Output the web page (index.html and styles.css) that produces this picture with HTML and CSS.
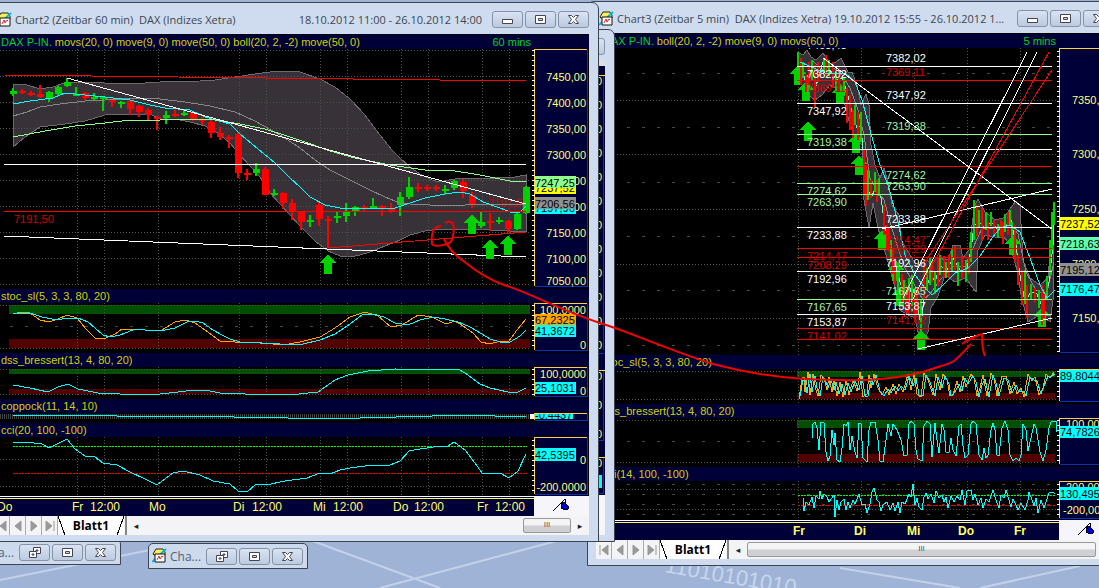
FILE: index.html
```html
<!DOCTYPE html>
<html lang="de">
<head>
	<meta charset="UTF-8">
	<meta name="viewport" content="width=device-width, initial-scale=1.0">
	<title>DAX Charts</title>
	<link rel="stylesheet" href="styles.css">
</head>
<body>
	<!-- shared icons -->
	<svg class="defs" width="0" height="0">
		<symbol id="up" viewBox="0 0 16 20"><path d="M8 0L16 9H12V20H4V9H0z" fill="#00d200"/></symbol>
		<symbol id="doc" viewBox="0 0 15 15">
			<path d="M1 6L4 1H11L13 4V7H2z" fill="#ffee58" stroke="#222"/>
			<path d="M0 14L14 1" stroke="#00b8e6" stroke-width="2"/>
			<path d="M3 6H13V14H3z" fill="#fff" stroke="#111"/>
			<path d="M5 12L7 8L8 11L10 8L11 9" fill="none" stroke="#e22"/>
		</symbol>
		<symbol id="min" viewBox="0 0 13 13"><path d="M1.500 6.500H11.500V10.500H1.500z" fill="#fff" stroke="#445"/></symbol>
		<symbol id="max" viewBox="0 0 13 13"><path d="M1.500 2.500H11.500V10.500H1.500zM4.500 5.500H8.500V7.500H4.500z" fill="#fff" fill-rule="evenodd" stroke="#445"/></symbol>
		<symbol id="restore" viewBox="0 0 13 13">
			<path d="M5.500 1.500H12.500V7.500H5.500zM8 4H10V5H8z" fill="#fff" fill-rule="evenodd" stroke="#445"/>
			<path d="M1.500 5.500H8.500V11.500H1.500zM4 8H6V9H4z" fill="#fff" fill-rule="evenodd" stroke="#445"/>
		</symbol>
		<symbol id="close" viewBox="0 0 13 13"><path d="M1.500 2.500H4.500L6.500 4.500L8.500 2.500H11.500L8.500 6.500L11.500 10.500H8.500L6.500 8.500L4.500 10.500H1.500L4.500 6.500z" fill="#fff" stroke="#445"/></symbol>
		<symbol id="pin" viewBox="0 0 16 13"><path d="M0 12L12 0V4" fill="none" stroke="#000"/><path d="M8 5L11 3L15 7V10L12 11L8 9z" fill="#00c" stroke="#002"/></symbol>
	</svg>

	<main class="desktop">
		<svg class="wallpaper" viewBox="0 0 1099 588" preserveAspectRatio="xMinYMax slice">
			<path d="M310 540L440 588M380 588L560 540M0 580L160 548M840 568L960 588M980 588L1080 566" stroke="#c3d2ea" stroke-width="2" fill="none"/>
			<text x="664" y="572" transform="rotate(10 664 572)">11010101010</text>
		</svg>

		<!-- Chart3 -->
		<section class="window chart3">
			<header class="titlebar">
				<svg class="app-icon"><use href="#doc"/></svg>
				<h2>Chart3 (Zeitbar 5 min)&nbsp; DAX (Indizes Xetra) <span>19.10.2012 15:55 - 26.10.2012 1...</span></h2>
				<button aria-label="Minimieren"><svg><use href="#min"/></svg></button>
				<button aria-label="Maximieren"><svg><use href="#max"/></svg></button>
				<button aria-label="Schließen"><svg><use href="#close"/></svg></button>
			</header>
			<div class="pane-head first"><b>DAX P-IN.</b> boll(20, 2, -2) move(9, 0) movs(60, 0) <i>5 mins</i></div>
			<svg class="plot" viewBox="596 48 518 307">
				<path class="grid" d="M605 100.500H1058M605 154.500H1058M605 209.500H1058M605 264.500H1058M605 318.500H1058M798.500 48V355M861.500 48V355M914.500 48V355M967.500 48V355M1020.500 48V355"/>
				<path class="dash" d="M612 73.500H1058M612 127.500H1058M612 182.500H1058M612 236.500H1058M612 290.500H1058M612 345.500H1058"/>
				<path class="band" d="M797 52L803 55L807 50L811 57L816 60L823 53L830 64L836 62L841 58L848 72L852 72L857 85L861 105L866 94L869 105L871 145L875 165L880 178L884 168L888 182L892 205L899 215L901 240L912 258L918 268L925 260L931 262L937 258L948 260L953 245L960 245L963 258L969 250L972 225L975 205L978 199L985 212L995 220L1003 218L1008 212L1012 206L1016 201L1020 206L1023 260L1030 278L1040 285L1048 278L1050 255L1053 215V300L1050 322L1045 318L1038 316L1028 322L1022 300L1017 270L1010 245L1004 237L995 237L985 235L978 250L976 292L970 284L966 278L955 282L945 275L938 296L931 308L928 332L921 345L915 318L908 315L900 310L893 280L886 255L878 228L873 203L869 228L864 200L862 145L857 140L850 125L845 105L838 90L830 85L822 95L815 100L808 95L802 85L797 75z"/>
				<g fill="#00d200">
					<use href="#up" x="790" y="65" width="16" height="20"/><use href="#up" x="798" y="81" width="16" height="20"/>
					<use href="#up" x="800" y="121" width="16" height="20"/><use href="#up" x="832" y="80" width="16" height="27"/>
					<use href="#up" x="848" y="133" width="16" height="20"/><use href="#up" x="851" y="155" width="16" height="20"/>
					<use href="#up" x="874" y="229" width="16" height="22"/><use href="#up" x="888" y="260" width="16" height="21"/>
					<use href="#up" x="892" y="286" width="16" height="20"/><use href="#up" x="913" y="330" width="16" height="20"/>
					<use href="#up" x="1005" y="235" width="16" height="20"/><use href="#up" x="1034" y="307" width="16" height="20"/>
				</g>
				<path class="line gray" d="M812 60L822 70L830 66L840 72L850 88L858 110L864 135L870 178L878 192L884 200L890 222L897 245L905 268L915 286L923 300L930 294L940 280L952 267L965 266L973 248L982 228L995 228L1010 224L1018 234L1026 272L1036 290L1046 296L1054 262"/>
				<path class="line mint" d="M800 60L805 80L812 68L816 86L823 62L829 68L836 80L842 78L847 92L852 112L857 128L861 126L863 150L867 190L872 196L876 186L881 198L884 220L888 242L893 253L897 272L902 288L907 302L912 285L917 305L921 325L925 290L931 275L935 282L940 266L947 270L953 258L960 270L966 272L971 250L974 225L979 222L985 228L991 222L998 230L1006 226L1011 220L1016 245L1020 275L1025 302L1031 292L1037 294L1043 309L1049 282L1053 245V222"/>
				<path class="tick-up" d="M798 52V70M803 62V78M812 60V80M824 58V72M829 60V76M836 72V90M844 78V96M855 105V125M861 112V140M868 170V200M875 172V192M879 178V196M891 240V262M898 265V290M904 280V300M909 278V302M912 275V306M921 300V338M927 268V290M930 258V285M935 272V294M940 255V275M946 262V278M952 248V272M958 262V286M966 260V282M971 232V262M974 200V240M979 210V228M986 212V230M991 212V226M998 224V238M1005 214V232M1010 210V226M1012 222V240M1025 270V304M1031 284V300M1039 290V308M1047 276V300M1050 240V276M1052 212V250M1054 202V225"/>
				<path class="tick-down" d="M801 58V85M806 75V92M809 62V84M815 65V107M818 62V82M826 55V76M833 62V88M839 68V92M847 88V123M850 95V130M853 110V138M858 112V140M864 150V196M866 165V206M871 180V198M877 180V202M884 205V235M887 225V250M889 228V252M893 248V274M895 258V284M902 274V302M906 285V312M908 290V315M915 292V322M917 288V315M924 260V300M932 262V282M938 258V286M944 256V278M949 255V278M955 246V270M962 256V278M969 258V274M977 205V236M982 208V240M988 222V240M994 220V236M1001 220V236M1003 222V244M1008 212V235M1015 225V262M1018 255V285M1022 270V305M1027 285V318M1035 288V302M1042 285V325M1044 290V318"/>
				<path class="line cyan" d="M800 62L825 73L845 73L855 82L862 100L870 130L880 165L888 185L898 222L905 255L915 275L925 288L932 295L942 286L955 273L968 268L980 256L992 238L1000 228L1010 225L1020 232L1030 258L1040 285L1047 298L1055 290"/>
				<path class="line white" d="M797 66.500H1052M797 103.500H1052M797 149.500H1052M797 227.500H1052M797 271.500H1052M797 314.500H1052"/>
				<path class="line red" d="M797 80.500H1052M797 166.500H1052M797 248.500H1052M797 257.500H1052M797 328.500H1052M797 339.500H1052"/>
				<path class="line lime" d="M797 134.500H1052M797 183.500H1052M797 194.500H1052M797 299.500H1052"/>
				<path class="line white" d="M823 58L1052 229M903 298L1027 52M906 313L1037 52M882 229L1052 189M918 349L1052 318"/>
				<path class="line red" d="M904 317L1049 52M923 265L1052 70"/>
				<g class="t white">
					<text x="807" y="49">7403,43</text>
					<text x="807" y="78">7382,02</text><text x="807" y="115">7347,92</text><text x="807" y="239">7233,88</text><text x="807" y="283">7192,96</text><text x="807" y="326">7153,87</text>
					<text x="886" y="62">7382,02</text><text x="886" y="99">7347,92</text><text x="886" y="223">7233,88</text><text x="886" y="267">7192,96</text><text x="886" y="310">7153,87</text>
				</g>
				<g class="t dark-red">
					<text x="807" y="92">7369,11</text><text x="807" y="260">7214,47</text><text x="807" y="269">7208,29</text><text x="807" y="340">7141,02</text>
					<text x="886" y="76">7369,11</text><text x="886" y="244">7214,47</text><text x="886" y="253">7208,29</text><text x="886" y="324">7141,02</text>
				</g>
				<g class="t lime">
					<text x="807" y="146">7319,38</text><text x="807" y="195">7274,62</text><text x="807" y="206">7263,90</text><text x="807" y="311">7167,65</text>
					<text x="886" y="130">7319,38</text><text x="886" y="179">7274,62</text><text x="886" y="190">7263,90</text><text x="886" y="295">7167,65</text>
				</g>
				<path class="scale" d="M1059 48H1114V352H1059z"/>
				<path class="edge-y" d="M1059.500 352V48.500H1113"/><path class="edge-b" d="M1060 352.500H1113"/>
				<path class="ticks" d="M1058 51V352"/>
				<g class="t yellow"><text x="1072" y="104">7350,00</text><text x="1072" y="158">7300,00</text><text x="1072" y="213">7250,00</text><text x="1072" y="268">7200,00</text><text x="1072" y="322">7150,00</text></g>
				<g class="tag">
					<rect x="1060" y="217" width="44" height="13" fill="#ff0"/><text x="1060" y="228">7237,52</text>
					<rect x="1060" y="237" width="44" height="13" fill="#5fffb0"/><text x="1060" y="248">7218,63</text>
					<rect x="1060" y="263" width="44" height="13" fill="#909090"/><text x="1060" y="274">7195,12</text>
					<rect x="1060" y="283" width="44" height="13" fill="#0ff"/><text x="1060" y="293">7176,47</text>
				</g>
			</svg>
			<div class="pane-head">stoc_sl(5, 3, 3, 80, 20)</div>
			<svg class="plot" viewBox="596 369 518 35">
				<path class="hi" d="M797 371H1055V377H797z"/><path class="lo" d="M797 393H1055V399H797z"/>
				<path class="grid" d="M605 371.500H1058M605 399.500H1058M798.500 369V404M861.500 369V404M914.500 369V404M967.500 369V404M1020.500 369V404"/>
				<path class="line orange" d="M799 399L802 378L804 377L805 392L808 372L810 395L813 374L816 390L818 396L821 375L824 378L827 390L829 377L832 392L834 380L837 396L840 382L843 397L846 380L849 395L853 380L857 391L860 372L863 397L867 394L869 375L871 388L874 374L878 388L882 395L886 387L889 395L893 384L896 394L899 384L903 392L908 374L911 390L914 374L917 394L921 397L924 373L928 380L933 395L936 374L940 390L943 374L947 380L950 396L953 395L957 381L960 392L963 376L966 387L971 374L974 378L977 396L980 388L983 375L987 396L991 373L994 378L997 396L1002 376L1006 376L1010 394L1014 382L1017 394L1021 388L1024 397L1028 374L1032 381L1035 377L1039 395L1043 388L1046 374L1050 378L1054 372"/>
				<path class="line cyan" d="M800 396L803 380L805 380L807 393L810 374L812 392L815 376L817 388L820 396L823 377L826 382L828 388L831 379L834 390L836 382L839 394L842 384L845 395L848 383L851 392L855 381L859 390L862 376L865 396L868 396L871 378L873 385L876 375L880 391L884 396L888 389L891 393L895 386L898 391L901 386L905 390L909 376L913 386L916 378L919 395L923 396L926 375L930 382L935 396L938 377L942 388L945 376L949 384L951 396L955 392L959 384L962 391L965 378L968 384L973 376L976 382L979 397L982 385L985 379L989 397L993 375L996 383L999 396L1004 378L1008 380L1012 393L1016 385L1019 392L1023 391L1026 396L1030 377L1034 380L1037 381L1041 394L1044 386L1048 376L1052 376L1055 374"/>
				<path class="scale" d="M1059 369H1114V401H1059z"/><path class="edge-y" d="M1059.500 401V369.500H1113"/><path class="edge-b" d="M1060 401.500H1113"/><path class="ticks" d="M1058 371V401"/>
				<g class="tag"><rect x="1060" y="370" width="44" height="12" fill="#0ff"/><text x="1060" y="380">89,8044</text></g>
			</svg>
			<div class="pane-head">dss_bressert(13, 4, 80, 20)</div>
			<svg class="plot" viewBox="596 418 518 49">
				<path class="hi" d="M797 420H1055V428H797z"/><path class="lo" d="M797 454H1055V462H797z"/>
				<path class="grid" d="M605 420.500H1058M605 462.500H1058M798.500 418V467M861.500 418V467M914.500 418V467M967.500 418V467M1020.500 418V467"/>
				<path class="dash" d="M612 441.500H1058"/>
				<path class="line cyan" d="M812 438L813 424L815 422L817 428L819 450L821 422L824 423L826 452L828 461L830 456L832 430L834 445L835 433L837 460L840 462L842 448L844 424L846 426L848 422L850 450L852 436L855 452L857 458L859 423L861 424L863 458L867 462L869 430L871 422L875 422L878 440L880 461L883 462L886 440L888 424L891 436L893 424L897 430L901 440L904 456L907 455L909 424L911 421L914 424L916 450L918 459L922 461L924 426L927 421L930 424L932 457L935 423L937 440L939 453L942 424L944 430L946 452L949 452L951 438L953 450L956 456L959 426L961 424L963 446L965 458L968 455L971 424L973 421L976 424L979 455L982 460L984 448L986 458L988 455L991 430L993 423L995 430L997 455L999 456L1002 428L1005 421L1008 430L1010 455L1013 461L1016 458L1019 461L1021 455L1023 424L1026 430L1028 451L1031 438L1034 424L1036 428L1040 452L1043 461L1046 450L1049 428L1051 422L1056 421L1057 432"/>
				<path class="scale" d="M1059 418H1114V464H1059z"/><path class="edge-y" d="M1059.500 464V418.500H1113"/><path class="edge-b" d="M1060 464.500H1113"/><path class="ticks" d="M1058 420V464"/>
				<g class="t yellow"><text x="1066" y="428">100,0000</text></g>
				<g class="tag"><rect x="1060" y="426" width="44" height="12" fill="#0ff"/><text x="1060" y="436">74,7826</text></g>
			</svg>
			<div class="pane-head">cci(14, 100, -100)</div>
			<svg class="plot" viewBox="596 481 518 39">
				<path class="dash" d="M612 484.500H1058M612 494.500H1058M612 504.500H1058M612 514.500H1058"/>
				<path class="grid" d="M605 489.500H1058M605 509.500H1058M798.500 481V520M861.500 481V520M914.500 481V520M967.500 481V520M1020.500 481V520"/>
				<path class="dots-green" d="M798 495.500H1055"/><path class="dots-red" d="M798 505.500H1055"/>
				<path class="line cyan" d="M803 498L804 511L806 502L809 505L812 497L814 508L816 496L819 499L820 491L822 499L824 494L827 497L829 502L832 498L834 495L835 517L837 500L839 510L841 502L844 499L846 510L848 502L850 508L853 500L855 504L859 494L862 505L865 504L867 513L870 504L872 492L874 488L877 500L879 502L881 511L883 505L887 502L890 510L893 503L895 511L898 502L900 513L902 502L905 504L909 494L911 497L913 484L915 505L917 498L919 507L922 510L924 497L926 493L928 499L931 494L934 503L936 491L939 498L942 495L944 502L946 497L948 508L951 496L954 502L957 496L960 500L962 490L965 505L967 491L971 490L973 500L975 494L978 505L981 498L983 508L986 499L989 502L993 490L996 500L999 508L1001 495L1004 498L1006 490L1009 500L1011 507L1013 499L1016 505L1018 510L1021 503L1025 510L1028 500L1029 492L1032 500L1034 506L1036 498L1038 513L1041 500L1044 508L1047 499L1049 493L1053 492L1055 494"/>
				<path class="scale" d="M1059 481H1114V518H1059z"/><path class="edge-y" d="M1059.500 518V481.500H1113"/><path class="edge-b" d="M1060 518.500H1113"/><path class="ticks" d="M1058 484V518"/>
				<g class="t yellow"><text x="1066" y="491">200,0000</text><text x="1063" y="514">-200,0000</text></g>
				<g class="tag"><rect x="1060" y="487" width="50" height="13" fill="#0ff"/><text x="1060" y="498">130,4954</text></g>
			</svg>
			<svg class="axis bold" viewBox="596 520 518 20">
				<path d="M596 520H1059V540H596z" fill="#000038"/><path d="M1059 518H1114V540H1059z" fill="#f6f6fa"/>
				<path class="line white" d="M596 520.500H1059"/><path class="line yellow" d="M596 522.500H1059"/>
				<text x="793" y="535">Fr</text><text x="854" y="535">Di</text><text x="907" y="535">Mi</text><text x="958" y="535">Do</text><text x="1014" y="535">Fr</text>
				<use href="#pin" x="1078" y="523" width="16" height="13"/>
			</svg>
			<div class="tabbar">
				<button class="nav" aria-label="Erstes Blatt"><svg viewBox="0 0 10 12"><path d="M1 1V11M9 1V11L3 6z"/></svg></button>
				<button class="nav" aria-label="Zurück"><svg viewBox="0 0 10 12"><path d="M8 1V11L2 6z"/></svg></button>
				<button class="nav" aria-label="Weiter"><svg viewBox="0 0 10 12"><path d="M2 1V11L8 6z"/></svg></button>
				<button class="nav" aria-label="Letztes Blatt"><svg viewBox="0 0 10 12"><path d="M1 1V11L7 6zM9 1V11"/></svg></button>
				<button class="tab">Blatt1</button>
				<div class="scrollbar"><button class="arrow" aria-label="Links">◂</button><span class="thumb wide">III</span><button class="arrow" aria-label="Rechts">▸</button></div>
			</div>
		</section>

		<!-- window mostly hidden behind Chart2 -->
		<section class="window hidden-chart">
			<header class="titlebar">
				<button aria-label="Schließen"></button>
			</header>
			<svg class="plot" viewBox="590 61 15 474">
				<path d="M590 61H605V66H590z" fill="#ddd"/><path class="scale" d="M590 66H605V494H590z"/>
				<path class="edge-y" d="M590 75.500H605M590 370.500H605M590 457.500H605"/><path class="edge-b" d="M603.500 76V350M603.500 371V440M603.500 458V494M590 353.500H604M590 440.500H604M590 493.500H604"/>
				<path d="M590 475H602V488H590z" fill="#0ff"/><path d="M590 495H605V535H590z" fill="#f6f6fa"/>
				<g class="t yellow end"><text x="602" y="85">0</text><text x="602" y="109">0</text><text x="602" y="133">0</text><text x="602" y="157">0</text><text x="602" y="181">0</text><text x="602" y="205">0</text><text x="602" y="229">0</text><text x="602" y="253">0</text><text x="602" y="277">0</text><text x="602" y="301">0</text><text x="602" y="325">0</text><text x="602" y="349">0</text><text x="602" y="380">0</text><text x="602" y="409">0</text><text x="602" y="438">0</text><text x="602" y="467">0</text></g>
			</svg>
		</section>

		<!-- minimised windows -->
		<section class="minimised one">
			<svg class="app-icon"><use href="#doc"/></svg><h2>Cha...</h2>
			<button aria-label="Wiederherstellen"><svg><use href="#restore"/></svg></button>
			<button aria-label="Maximieren"><svg><use href="#max"/></svg></button>
			<button aria-label="Schließen"><svg><use href="#close"/></svg></button>
		</section>
		<section class="minimised two">
			<svg class="app-icon"><use href="#doc"/></svg><h2>Cha...</h2>
			<button aria-label="Wiederherstellen"><svg><use href="#restore"/></svg></button>
			<button aria-label="Maximieren"><svg><use href="#max"/></svg></button>
			<button aria-label="Schließen"><svg><use href="#close"/></svg></button>
		</section>

		<!-- Chart2 -->
		<section class="window chart2">
			<header class="titlebar">
				<svg class="app-icon"><use href="#doc"/></svg>
				<h2>Chart2 (Zeitbar 60 min)&nbsp; DAX (Indizes Xetra)</h2>
				<span class="range">18.10.2012 11:00 - 26.10.2012 14:00</span>
				<button aria-label="Minimieren"><svg><use href="#min"/></svg></button>
				<button aria-label="Maximieren"><svg><use href="#max"/></svg></button>
				<button aria-label="Schließen"><svg><use href="#close"/></svg></button>
			</header>
			<div class="pane-head first"><b>DAX P-IN.</b> movs(20, 0) move(9, 0) move(50, 0) boll(20, 2, -2) move(50, 0) <i>60 mins</i></div>
			<svg class="plot" viewBox="-6 49 595 240">
				<path class="band" d="M13 84L27 85L40 89L53 87L67 82L80 82L130 84L160 82L200 81L215 80L235 77L255 74L270 72L288 71L300 72L320 79L335 87L350 99L365 115L380 135L392 150L400 158L410 167L420 174L432 180L438 182L455 179L470 178L495 178L515 177L526 175V231L510 231L490 230L460 229L440 229L425 231L410 235L400 240L385 246L370 252L360 255L350 257L340 256L328 251L315 241L300 226L290 215L280 204L270 193L260 177L250 166L240 155L230 143L215 131L205 126L190 122L175 119L160 119L150 114L130 114L105 115L85 121L65 124L40 127L25 137L13 147z"/>
				<path class="grid" d="M0 50.500H531M0 76.500H531M0 102.500H531M0 128.500H531M0 154.500H531M0 180.500H531M0 206.500H531M0 232.500H531M0 258.500H531M0 284.500H531M77.500 49V286M104.500 49V286M158.500 49V286M239.500 49V286M266.500 49V286M320.500 49V286M347.500 49V286M401.500 49V286M428.500 49V286M482.500 49V286M509.500 49V286"/>
				<g class="t dark-red"><text x="488" y="207">7191,50</text></g>
				<path class="tick-up" d="M13 88V96M49 91V102M58 86V96M67 78V87M76 87V96M94 93V100M103 96V111M121 101V108M166 111V124M184 110V116M256 163V176M274 189V196M310 215V227M337 211V223M346 203V222M355 206V216M373 198V208M400 192V216M409 177V199M445 185V194M454 180V190M481 212V228M499 217V224M517 213V230M526 186V214"/>
				<path class="body-up" d="M13 91V94M49 92V98M58 87V94M67 82V86M76 94V96M94 97V99M103 97V99M121 102V104M166 115V118M184 113V115M256 169V173M274 193V195M310 220V222M337 216V218M346 212V216M355 207V211M373 206V208M400 197V205M409 187V197M445 189V191M454 181V188M481 222V226M499 220V222M517 214V229M526 187V213"/>
				<path class="tick-down" d="M22 89V94M31 91V96M40 85V98M85 92V100M112 98V107M130 100V115M139 105V117M148 108V120M157 116V130M175 108V117M193 112V121M202 117V125M211 120V138M220 127V140M229 135V148M238 132V178M247 169V180M265 167V195M283 192V209M292 199V220M301 211V230M319 201V226M328 216V248M364 205V212M382 205V216M391 203V213M418 183V192M427 185V191M436 185V191M463 179V198M472 192V208M490 213V231M508 220V232"/>
				<path class="body-down" d="M22 91V93M31 93V95M40 94V97M85 93V98M112 99V102M130 101V109M139 106V112M148 110V115M157 117V119M175 114V116M193 112V120M202 119V121M211 122V133M220 133V137M229 137V139M238 134V173M247 173V175M265 169V195M283 193V203M292 203V212M301 212V222M319 205V219M328 219V221M364 207V209M382 206V208M391 209V211M418 187V189M427 187V189M436 187V189M463 182V191M472 195V204M490 221V223M508 221V229"/>
				<path class="line gray" d="M13 116L27 112L40 107L60 104L85 101L105 100L140 98L160 99L185 102L210 106L235 112L255 121L280 135L300 148L315 160L330 170L350 180L370 190L385 197L400 203L410 204L430 205L465 205L480 204L526 204"/>
				<path class="line cyan" d="M13 104L30 101L53 98L65 93L85 95L105 97L130 100L150 105L165 108L190 110L205 117L230 124L240 134L258 149L275 163L290 178L300 187L310 197L325 205L340 208L395 208L410 203L425 198L445 194L460 192L470 194L483 202L500 208L510 212L520 212L526 206"/>
				<path class="line lime" d="M13 137L45 131L75 126L105 123L130 120L160 120L190 119L215 120L240 124L265 129L290 137L308 143L330 151L355 158L390 165L425 170L455 171L480 175L510 181L526 182"/>
				<path class="line white" d="M67 78L526 204M4 164.500H526M4 236L526 257"/>
				<path class="line red" d="M4 75L526 81M4 211.500H526M328 248L526 232"/>
				<use href="#up" x="320" y="254" width="16" height="20"/><use href="#up" x="464" y="214" width="16" height="20"/>
				<use href="#up" x="482" y="239" width="16" height="20"/><use href="#up" x="500" y="235" width="16" height="20"/>
				<g class="t dark-red"><text x="14" y="223">7191,50</text></g>
				<path class="scale" d="M534 49H588V286H534z"/><path class="edge-y" d="M534.500 286V49.500H587"/><path class="edge-b" d="M535 286H587.500V50"/><path class="ticks" d="M533 50V285"/>
				<g class="t yellow end"><text x="586" y="81">7450,00</text><text x="586" y="107">7400,00</text><text x="586" y="133">7350,00</text><text x="586" y="159">7300,00</text><text x="586" y="185">7250,00</text><text x="586" y="211">7200,00</text><text x="586" y="237">7150,00</text><text x="586" y="263">7100,00</text><text x="586" y="285">7050,00</text></g>
				<g class="tag">
					<rect x="535" y="182" width="41" height="12" fill="#ff0"/><text x="535" y="192">7237,52</text>
					<rect x="535" y="176" width="41" height="12" fill="#8cff8c"/><text x="535" y="187">7247,25</text>
					<rect x="535" y="202" width="41" height="12" fill="#0ff"/><text x="535" y="212">7197,96</text>
					<rect x="535" y="197" width="41" height="12" fill="#909090"/><text x="535" y="208">7206,56</text>
				</g>
			</svg>
			<div class="pane-head">stoc_sl(5, 3, 3, 80, 20)</div>
			<svg class="plot" viewBox="-6 303 595 50">
				<path class="hi" d="M9 305H530V314H9z"/><path class="lo" d="M9 339H530V348H9z"/>
				<path class="grid" d="M0 305.500H531M0 348.500H531M77.500 303V350M104.500 303V350M158.500 303V350M239.500 303V350M266.500 303V350M320.500 303V350M347.500 303V350M401.500 303V350M428.500 303V350M482.500 303V350M509.500 303V350"/>
				<path class="dash" d="M10 326.500H530"/>
				<path class="line orange" d="M13 314L22 312L30 313L40 320L49 322L58 319L67 315L77 318L86 329L95 338L106 338L115 334L122 329L140 329L150 331L162 330L175 322L186 320L195 323L205 330L220 341L235 342L262 343L283 345L300 342L320 337L335 328L350 317L365 312L378 316L391 327L402 325L418 315L432 317L446 324L455 321L463 326L473 333L481 342L490 344L500 341L509 341L517 330L526 319"/>
				<path class="line cyan" d="M13 314L30 313L42 317L57 320L67 318L78 318L88 322L95 328L103 335L110 337L120 335L133 330L140 329L150 331L165 330L175 328L187 322L195 321L203 323L213 330L222 335L230 339L240 342L260 343L280 344L299 345L320 340L335 334L350 324L362 315L373 314L384 317L395 323L408 325L420 320L433 317L445 319L458 322L470 327L482 334L490 339L500 342L510 342L520 336L526 330"/>
				<path class="scale" d="M534 303H588V350H534z"/><path class="edge-y" d="M534.500 350V303.500H587"/><path class="edge-b" d="M535 350.500H587.500V304"/><path class="ticks" d="M533 305V349"/>
				<g class="t yellow end"><text x="586" y="314">100,0000</text><text x="586" y="349">0</text></g>
				<g class="tag"><rect x="535" y="314" width="41" height="11" fill="#ffa500"/><text x="535" y="324">67,2325</text><rect x="535" y="325" width="41" height="12" fill="#0ff"/><text x="535" y="335">41,3672</text></g>
			</svg>
			<div class="pane-head">dss_bressert(13, 4, 80, 20)</div>
			<svg class="plot" viewBox="-6 367 595 32">
				<path class="hi" d="M9 369H530V374H9z"/><path class="lo" d="M9 389H530V394H9z"/>
				<path class="grid" d="M0 369.500H531M0 394.500H531M77.500 367V396M104.500 367V396M158.500 367V396M239.500 367V396M266.500 367V396M320.500 367V396M347.500 367V396M401.500 367V396M428.500 367V396M482.500 367V396M509.500 367V396"/>
				<path class="line cyan" d="M13 385L30 388L48 392L58 387L68 384L78 389L98 393L120 394L160 394L178 392L195 390L210 391L220 393L245 394L299 394L318 392L335 380L348 375L368 371L395 369L440 370L458 369L465 373L480 384L490 388L508 392L518 392L526 388"/>
				<path class="scale" d="M534 367H588V396H534z"/><path class="edge-y" d="M534.500 396V367.500H587"/><path class="edge-b" d="M535 396.500H587.500V368"/><path class="ticks" d="M533 369V395"/>
				<g class="t yellow end"><text x="586" y="378">100,0000</text><text x="586" y="395">0</text></g>
				<g class="tag"><rect x="535" y="382" width="41" height="12" fill="#0ff"/><text x="535" y="392">25,1031</text></g>
			</svg>
			<div class="pane-head">coppock(11, 14, 10)</div>
			<svg class="plot" viewBox="-6 413 595 10">
				<path d="M0 416.500H531" stroke="#444" stroke-width="5" stroke-dasharray="1 1"/>
				<path class="line cyan" d="M13 415.500H117M117 416.500H234M234 417.500H288M288 418.500H360M360 417.500H396M396 416.500H432M432 415.500H495M495 416.500H526"/>
				<path class="scale" d="M534 413H588V420H534z"/>
				<g class="tag"><rect x="535" y="414" width="38" height="5" fill="#0ff"/><text x="535" y="419">-0,4437</text></g>
				<path d="M530 414H534V419H530z" fill="#fff"/><path d="M534 420H589V423H534z"/>
				<path class="edge-y" d="M534.500 420V413.500H587"/><path class="edge-b" d="M535 420.500H587.500V414"/>
			</svg>
			<div class="pane-head">cci(20, 100, -100)</div>
			<svg class="plot" viewBox="-6 437 595 59">
				<path class="grid" d="M0 459.500H531M0 486.500H531M77.500 437V496M104.500 437V496M158.500 437V496M239.500 437V496M266.500 437V496M320.500 437V496M347.500 437V496M401.500 437V496M428.500 437V496M482.500 437V496M509.500 437V496"/>
				<path class="dots-green" d="M13 446.500H527"/><path class="dots-red" d="M13 473.500H527"/>
				<path class="line cyan" d="M13 442L25 442L42 444L49 448L67 439L75 449L85 456L95 457L103 463L117 465L130 472L145 479L157 485L173 473L183 471L200 475L213 481L230 484L238 491L247 492L256 484L266 485L285 481L307 478L320 473L330 474L340 470L350 468L372 465L390 465L400 461L409 451L420 449L440 446L448 446L454 442L465 450L475 463L482 473L500 473L509 478L518 471L526 454"/>
				<path class="scale" d="M534 437H588V494H534z"/><path class="edge-y" d="M534.500 494V437.500H587"/><path class="edge-b" d="M535 494.500H587.500V438"/><path class="ticks" d="M533 440V494"/>
				<g class="t yellow end"><text x="586" y="464">0</text><text x="586" y="491">-200,0000</text></g>
				<g class="tag"><rect x="535" y="448" width="41" height="13" fill="#0ff"/><text x="535" y="459">42,5395</text></g>
			</svg>
			<svg class="axis" viewBox="-6 496 595 20">
				<path d="M-6 496H534V516H-6z" fill="#000038"/><path d="M534 496H589V516H534z" fill="#f6f6fa"/>
				<path class="line white" d="M-6 496.500H534"/><path class="line yellow" d="M-6 498.500H534"/>
				<text x="-3" y="511">Do</text><text x="72" y="511">Fr</text><text x="90" y="511">12:00</text><text x="149" y="511">Mo</text><text x="233" y="511">Di</text><text x="252" y="511">12:00</text><text x="313" y="511">Mi</text><text x="333" y="511">12:00</text><text x="393" y="511">Do</text><text x="414" y="511">12:00</text><text x="477" y="511">Fr</text><text x="495" y="511">12:00</text>
				<use href="#pin" x="553" y="499" width="16" height="13"/>
			</svg>
			<div class="tabbar">
				<button class="nav" aria-label="Erstes Blatt"><svg viewBox="0 0 10 12"><path d="M1 1V11M9 1V11L3 6z"/></svg></button>
				<button class="nav" aria-label="Zurück"><svg viewBox="0 0 10 12"><path d="M8 1V11L2 6z"/></svg></button>
				<button class="nav" aria-label="Weiter"><svg viewBox="0 0 10 12"><path d="M2 1V11L8 6z"/></svg></button>
				<button class="nav" aria-label="Letztes Blatt"><svg viewBox="0 0 10 12"><path d="M1 1V11L7 6zM9 1V11"/></svg></button>
				<button class="tab">Blatt1</button>
				<div class="scrollbar"><button class="arrow" aria-label="Links">◂</button><span class="thumb">III</span><button class="arrow" aria-label="Rechts">▸</button></div>
			</div>
		</section>

		<!-- pen annotation across both charts -->
		<svg class="pen" width="1099" height="588">
			<path d="M441 226C433 227 431 233 432 244C433 247 449 246 452 240C455 230 454 223 451 222Q448 221 445 223"/>
			<path d="M444 239C447 246 455 256 466 263C476 271 490 280 504 285C530 293 560 310 600 323C625 330 660 347 713 364C750 374 790 380 837 380C870 381 900 378 923 372C940 366 950 364 954 361C961 355 966 349 971 344"/>
			<path d="M962 344Q970 338 982 334Q982 350 985 356"/>
		</svg>
	</main>
</body>
</html>
```

FILE: styles.css
```css
body {
	margin: 0;
	font: 11px "Liberation Sans", Arial, sans-serif;
	overflow: hidden;
}
h2 {
	margin: 0;
	font-size: inherit;
	font-weight: normal;
	white-space: nowrap;
}
button {
	padding: 0;
	border: 0;
	background: none;
	font: inherit;
}
.defs {
	position: absolute;
}
.desktop {
	position: relative;
	min-height: 100vh;
	overflow: hidden;
	background: #9fb3d6;
}
.wallpaper {
	position: absolute;
	width: 100%;
	height: 100%;
}
.wallpaper text {
	font: 22px "Liberation Sans", Arial, sans-serif;
	fill: #c8d6ec;
}

/* windows */
.window {
	position: absolute;
	box-sizing: border-box;
	padding: 0 9px 6px 8px;
	border: 1px solid #3c444e;
	border-radius: 7px 7px 0 0;
	background: #cfdcef;
}
.chart2 {
	top: 2px;
	left: -15px;
	width: 614px;
}
.chart3 {
	top: 1px;
	left: 587px;
	right: -25px;
}
.hidden-chart {
	top: 29px;
	left: 581px;
	width: 34px;
}
.titlebar {
	display: flex;
	align-items: center;
	gap: 2px;
	box-sizing: border-box;
	height: 31px;
	padding-top: 2px;
	color: #3d4650;
	font: 11px "Open Sans", "Noto Sans", sans-serif;
}
.titlebar h2 {
	flex: 1;
}
.titlebar .range {
	margin-right: 8px;
}
.app-icon {
	flex: none;
	width: 15px;
	height: 15px;
	margin: 0 1px 0 3px;
}
.titlebar button,
.minimised button {
	display: flex;
	flex: none;
	align-items: center;
	justify-content: center;
	box-sizing: border-box;
	width: 31px;
	height: 17px;
	border: 1px solid #8592a8;
	border-radius: 3px;
	background: linear-gradient(#d9e3f2, #bccae0);
}
.titlebar button svg,
.minimised button svg {
	width: 13px;
	height: 13px;
}
.hidden-chart .titlebar button {
	width: 15px;
}
.minimised {
	position: absolute;
	display: flex;
	gap: 2px;
	box-sizing: border-box;
	height: 26px;
	width: 160px;
	padding: 4px 4px 0 0;
	border: 1px solid #3c444e;
	border-radius: 5px 5px 0 0;
	background: #cddaed;
	color: #566070;
	font: 12px/18px "Open Sans", "Noto Sans", sans-serif;
}
.minimised h2 {
	flex: 1;
}
.minimised.one {
	top: 539px;
	left: -39px;
}
.minimised.two {
	top: 543px;
	left: 148px;
}

/* chart panes */
.pane-head {
	height: 14px;
	padding-left: 7px;
	background: #000038;
	color: #d2d200;
	line-height: 14px;
	white-space: nowrap;
}
.pane-head.first {
	height: 15px;
	box-sizing: border-box;
	border-top: 1px solid #000;
}
.pane-head b {
	color: #00d21e;
	font-weight: normal;
}
.pane-head i {
	float: right;
	margin-right: 58px;
	color: #00d21e;
	font-style: normal;
}
.plot,
.axis {
	display: block;
	width: 100%;
	background: #000;
	shape-rendering: crispEdges;
}
.grid,
.dash,
.line,
.edge-y,
.edge-b,
.dots-green,
.dots-red {
	fill: none;
}
.grid {
	stroke: #4a544a;
	stroke-dasharray: 1 2;
}
.dash {
	stroke: #484848;
	stroke-dasharray: 3 12;
}
.band {
	fill: #383238;
	stroke: #706870;
}
.hi {
	fill: #005000;
}
.lo {
	fill: #520000;
}
.tick-up { stroke: #00d200; stroke-width: 2; }
.tick-down { stroke: #f00; stroke-width: 2; }
.body-up { stroke: #00d200; stroke-width: 7; }
.body-down { stroke: #f00; stroke-width: 7; }
.line.white { stroke: #fff; }
.line.red { stroke: #f00; }
.line.cyan { stroke: #0ff; }
.line.lime { stroke: #8cff8c; }
.line.mint { stroke: #6fffc0; }
.line.gray { stroke: #888; }
.line.orange { stroke: #ffa500; }
.line.yellow { stroke: #ffff64; }
.dots-green { stroke: #0f0; stroke-dasharray: 2 1; }
.dots-red { stroke: #f00; stroke-dasharray: 2 1; }
.scale {
	fill: #000038;
}
.edge-y { stroke: #ffd23c; }
.edge-b { stroke: #0032c8; }
.ticks {
	stroke: #fff;
	stroke-width: 3;
	stroke-dasharray: 1 4;
}
.t.white { fill: #fff; }
.t.dark-red { fill: #d20000; }
.t.lime { fill: #a8f5a8; }
.t.yellow { fill: #ffff78; }
.end {
	text-anchor: end;
}
.axis text {
	fill: #ffff64;
	font-size: 12px;
}
.axis.bold text {
	font-weight: bold;
}

/* sheet tabs */
.tabbar {
	display: flex;
	height: 19px;
	background: #f4f4f6;
}
.nav {
	width: 16px;
	border-right: 1px solid #aaa;
}
.nav svg {
	display: block;
	width: 10px;
	height: 12px;
	margin: auto;
	fill: #999;
	stroke: #999;
}
.tab {
	width: 66px;
	background:
		linear-gradient(70deg, transparent 6px, #000 6px, #000 7px, transparent 7px),
		linear-gradient(-70deg, transparent 6px, #000 6px, #000 7px, transparent 7px) #fff;
	color: #000;
	font: bold 12px/16px "Open Sans", "Noto Sans", sans-serif;
}
.scrollbar {
	display: flex;
	flex: 1;
	align-items: center;
	margin-left: 1px;
	border-left: 2px solid #888;
}
.arrow {
	width: 18px;
	color: #222;
	font: 9px "DejaVu Sans", sans-serif;
}
.thumb {
	box-sizing: border-box;
	width: 48px;
	height: 15px;
	margin-left: auto;
	border: 1px solid #999;
	border-radius: 2px;
	background: linear-gradient(#f4f4f4 45%, #d0d0d4 55%);
	color: #555;
	font-size: 8px;
	line-height: 12px;
	text-align: center;
}
.thumb.wide {
	flex: 1;
}
.pen {
	position: absolute;
	top: 0;
	left: 0;
	fill: none;
	stroke: #f00000;
	stroke-width: 2;
	pointer-events: none;
}
```
